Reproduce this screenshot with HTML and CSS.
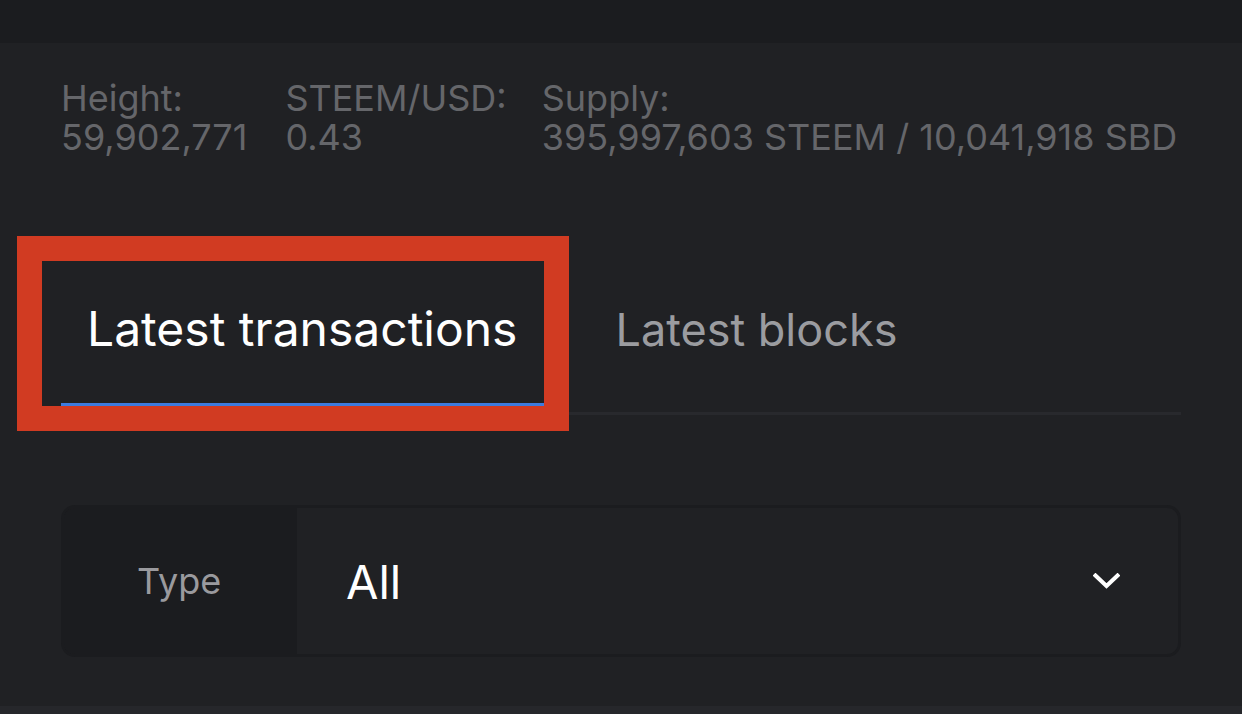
FILE: index.html
```html
<!DOCTYPE html>
<html lang="en">
<head>
<meta charset="utf-8">
<title>Explorer</title>
<link rel="stylesheet" href="styles.css">
</head>
<body>
<header class="topbar"></header>
<main class="content">
  <section class="stats">
    <div class="stat"><div>Height:</div><div>59,902,771</div></div>
    <div class="stat"><div>STEEM/USD:</div><div>0.43</div></div>
    <div class="stat"><div>Supply:</div><div>395,997,603 STEEM / 10,041,918 SBD</div></div>
  </section>
  <nav class="tabs">
    <div class="tab active">Latest transactions</div>
    <div class="tab">Latest blocks</div>
  </nav>
  <div class="select">
    <div class="select-label">Type</div>
    <div class="select-value">
      <span>All</span>
      <svg class="chev" width="27" height="16" viewBox="0 0 27 16"><polyline points="2.5,2.5 13.5,13 24.5,2.5" fill="none" stroke="#fff" stroke-width="4" stroke-linecap="square"/></svg>
    </div>
  </div>
  <div class="highlight"></div>
</main>
<div class="next"></div>
</body>
</html>
```
FILE: styles.css
```css
html, body {
  margin: 0;
  padding: 0;
  background: #202124;
  font-family: Inter, "Noto Sans", sans-serif;
  height: 714px;
  overflow: hidden;
}
.topbar {
  height: 43px;
  background: #1b1c1f;
}
.content {
  position: relative;
  padding: 36px 61px 49px;
}
.stats {
  display: flex;
  gap: 38px;
  font-size: 36px;
  line-height: 39px;
  color: #65666a;
  white-space: nowrap;
}
.stat:nth-child(2) {
  margin-right: -3px;
}
.tabs {
  display: flex;
  margin-top: 122px;
  padding-bottom: 6px;
  border-bottom: 3px solid #28292d;
}
.tab {
  font-size: 45px;
  line-height: 60px;
  padding: 21px 0 43px;
  color: #9b9ca0;
  border-bottom: 3px solid transparent;
}
.tab.active {
  font-size: 48px;
  padding: 20px 29px 44px 26px;
  color: #ffffff;
  border-bottom-color: #3b7be0;
  margin-right: 69px;
}
.select {
  display: flex;
  margin-top: 90px;
  height: 146px;
  border: 3px solid #1b1c1f;
  border-radius: 14px;
  overflow: hidden;
}
.select-label {
  width: 160px;
  padding-left: 73px;
  background: #1b1c1f;
  color: #9a9a9e;
  font-size: 36px;
  display: flex;
  align-items: center;
}
.select-value {
  flex: 1;
  display: flex;
  align-items: center;
  justify-content: space-between;
  padding: 0 58px 0 49px;
  color: #ffffff;
  font-size: 47px;
}
.highlight {
  position: absolute;
  left: 17px;
  top: 193px;
  width: 502px;
  height: 145px;
  border: 25px solid #d13b22;
}
.next {
  height: 20px;
  background: #26272b;
}
```
